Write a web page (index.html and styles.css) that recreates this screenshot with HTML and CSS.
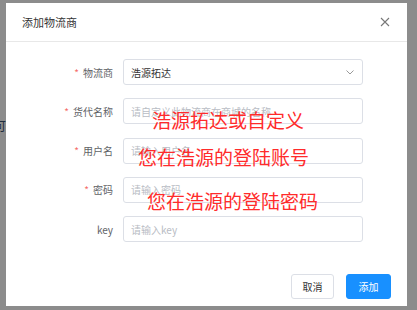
FILE: index.html
```html
<!DOCTYPE html>
<html lang="zh-CN">
<head>
    <meta charset="UTF-8">
    <meta name="viewport" content="width=device-width, initial-scale=1.0">
    <title>添加物流商</title>
    <link rel="stylesheet" href="styles.css">
</head>
<body>
    <!-- page behind the mask -->
    <span class="behind">可</span>

    <div class="dialog">
        <div class="dialog-header">
            <span class="dialog-title">添加物流商</span>
            <svg class="close" width="10" height="10" viewBox="0 0 10 10">
                <path d="M1 1 L9 9 M9 1 L1 9" stroke="#777" stroke-width="1.1" fill="none"/>
            </svg>
        </div>

        <div class="dialog-body">
            <div class="form-row">
                <label class="form-label required">物流商</label>
                <div class="input select">
                    <span class="value">浩源拓达</span>
                    <svg class="arrow" width="8" height="5" viewBox="0 0 8 5">
                        <path d="M0.5 0.5 L4 4 L7.5 0.5" stroke="#999" stroke-width="1" fill="none"/>
                    </svg>
                </div>
            </div>
            <div class="form-row">
                <label class="form-label required">货代名称</label>
                <div class="input"><span class="placeholder">请自定义此物流商在商城的名称</span></div>
            </div>
            <div class="form-row">
                <label class="form-label required">用户名</label>
                <div class="input"><span class="placeholder">请输入用户名</span></div>
            </div>
            <div class="form-row">
                <label class="form-label required">密码</label>
                <div class="input"><span class="placeholder">请输入密码</span></div>
            </div>
            <div class="form-row">
                <label class="form-label">key</label>
                <div class="input"><span class="placeholder">请输入key</span></div>
            </div>
        </div>

        <div class="dialog-footer">
            <button class="btn">取消</button>
            <button class="btn btn-primary">添加</button>
        </div>

        <!-- red notes written over the form -->
        <span class="note note-1">浩源拓达或自定义</span>
        <span class="note note-2">您在浩源的登陆账号</span>
        <span class="note note-3">您在浩源的登陆密码</span>
    </div>
</body>
</html>
```

FILE: styles.css
```css
body {
    margin: 0;
    width: 417px;
    height: 310px;
    background-color: #8c8c8c;
    font-family: "Noto Sans CJK SC", "Noto Sans", sans-serif;
    position: relative;
    overflow: hidden;
}

.behind {
    position: absolute;
    left: -6px;
    top: 117px;
    font-size: 12px;
    color: #1f2d3d;
}

.dialog {
    position: relative;
    margin: 3px 0 0 6px;
    width: 401px;
    height: 303px;
    background-color: white;
    display: flex;
    flex-direction: column;
}

.dialog-header {
    height: 38px;
    border-bottom: 1px solid #e8e8e8;
    display: flex;
    justify-content: space-between;
    align-items: center;
    padding: 0 17px 0 16px;
}

.dialog-title {
    font-size: 11px;
    color: #333;
}

.dialog-body {
    padding-top: 17px;
    display: flex;
    flex-direction: column;
    gap: 13.25px;
}

.form-row {
    display: flex;
    align-items: center;
    height: 26px;
}

.form-label {
    width: 117px;
    padding-right: 10px;
    box-sizing: border-box;
    text-align: right;
    font-size: 10px;
    color: #606266;
    flex-shrink: 0;
}

.form-label.required::before {
    content: "*";
    color: #f56c6c;
    margin-right: 4px;
}

.input {
    width: 240px;
    height: 26px;
    box-sizing: border-box;
    border: 1px solid #dcdfe6;
    border-radius: 3px;
    padding: 0 7px;
    display: flex;
    align-items: center;
    font-size: 10px;
}

.select {
    justify-content: space-between;
    padding-right: 8px;
}

.value {
    color: #333;
}

.placeholder {
    color: #b8bcc4;
}

.dialog-footer {
    margin-top: auto;
    display: flex;
    justify-content: flex-end;
    gap: 12px;
    padding: 0 16px 7px 0;
}

.btn {
    height: 25px;
    width: 43px;
    border: 1px solid #dcdfe6;
    border-radius: 3px;
    background-color: white;
    color: #333;
    font-family: inherit;
    font-size: 10px;
    padding: 0;
}

.btn-primary {
    width: 45px;
    background-color: #1890ff;
    border-color: #1890ff;
    color: white;
}

.note {
    position: absolute;
    font-size: 19px;
    line-height: 1;
    color: #ff2b2b;
    white-space: nowrap;
}

.note-1 {
    left: 146px;
    top: 107px;
}

.note-2 {
    left: 132px;
    top: 144px;
}

.note-3 {
    left: 141px;
    top: 188px;
}
```
